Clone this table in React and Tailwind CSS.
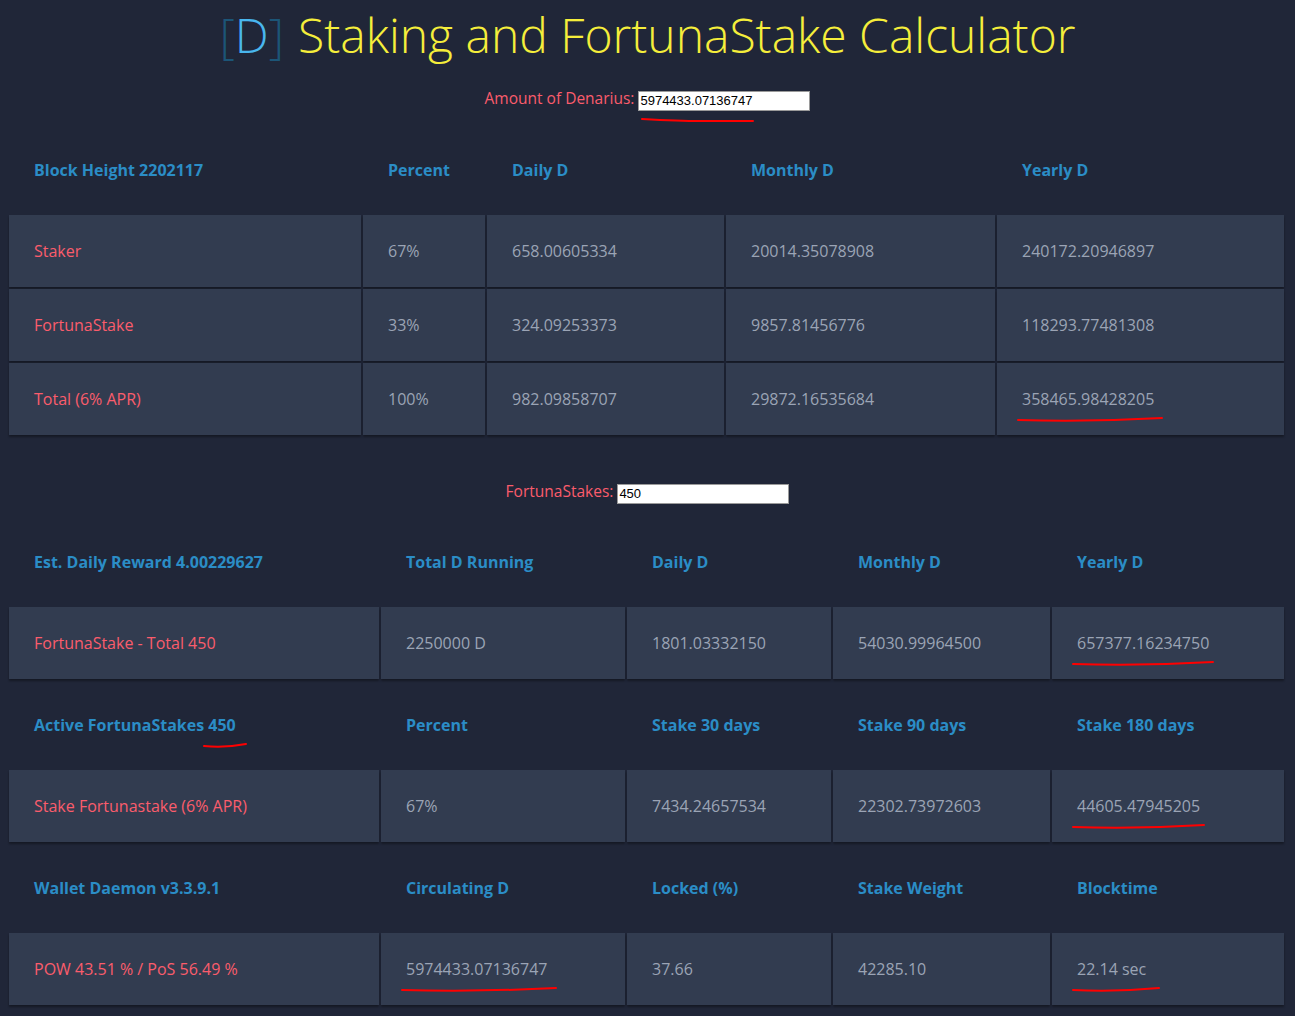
const Mark = ({ w, children }) => (
  <span className="relative inline-block">
    {children}
    <svg className="absolute left-[-6px] top-[29px] pointer-events-none" width={w + 12} height="8" viewBox={`0 0 ${w + 12} 8`}>
      <path d={`M2 4 Q ${(w + 12) / 2} 6 ${w + 10} 2`} stroke="#ff0000" strokeWidth="2" fill="none" strokeLinecap="round" />
    </svg>
  </span>
)

const Head = ({ children }) => (
  <div className="h-[87px] flex items-center pl-[25px] font-bold text-[#2b8dc6]">{children}</div>
)

const Cell = ({ red, children }) => (
  <div className={'h-[72px] flex items-center pl-[25px] bg-[#323c50] shadow-[0_2px_2px_rgba(0,0,0,0.35)] ' + (red ? 'text-[#fb5c6c]' : 'text-[#9ba4b5]')}>
    {children}
  </div>
)

const Input = ({ value, mark }) => (
  <span className="relative inline-block">
    <input
      readOnly
      value={value}
      className="w-[172px] h-[20px] bg-white border border-[#9a9a9a] px-[1px] text-[13px] text-black outline-none"
      style={{ fontFamily: '"Liberation Sans", Arial, sans-serif' }}
    />
    {mark && (
      <svg className="absolute left-[2px] top-[29px]" width="116" height="8" viewBox="0 0 116 8">
        <path d="M2 3 Q 40 5 60 5 T 113 5" stroke="#ff0000" strokeWidth="2" fill="none" strokeLinecap="round" />
      </svg>
    )}
  </span>
)

const App = () => {
  return (
    <div className="min-h-[1016px] bg-[#202638] pb-[20px] text-[16px]" style={{ fontFamily: '"Open Sans", "Noto Sans", sans-serif' }}>
      <h1 className="h-[70px] flex items-center justify-center text-[48px] font-light leading-none">
        <span className="text-[#1c5577]">[</span>
        <span className="text-[#49b6ee]">D</span>
        <span className="text-[#1c5577]">]</span>
        <span className="ml-[14px] text-[#f5ee3b]">Staking and FortunaStake Calculator</span>
      </h1>

      <div className="pt-[17px] pb-[15px] h-[56px] flex items-center justify-center gap-[4px]">
        <span className="text-[15.5px] text-[#fb5c6c]">Amount of Denarius:</span>
        <Input value="5974433.07136747" mark />
      </div>

      <div className="ml-[9px] w-[1275px] grid grid-cols-[352px_122px_237px_269px_287px] gap-[2px]">
        <Head>Block Height 2202117</Head>
        <Head>Percent</Head>
        <Head>Daily D</Head>
        <Head>Monthly D</Head>
        <Head>Yearly D</Head>

        <Cell red>Staker</Cell>
        <Cell>67%</Cell>
        <Cell>658.00605334</Cell>
        <Cell>20014.35078908</Cell>
        <Cell>240172.20946897</Cell>

        <Cell red>FortunaStake</Cell>
        <Cell>33%</Cell>
        <Cell>324.09253373</Cell>
        <Cell>9857.81456776</Cell>
        <Cell>118293.77481308</Cell>

        <Cell red>Total (6% APR)</Cell>
        <Cell>100%</Cell>
        <Cell>982.09858707</Cell>
        <Cell>29872.16535684</Cell>
        <Cell><Mark w={136}>358465.98428205</Mark></Cell>
      </div>

      <div className="mt-[45px] mb-[14px] h-[24px] flex items-center justify-center gap-[4px]">
        <span className="text-[15.5px] text-[#fb5c6c]">FortunaStakes:</span>
        <Input value="450" />
      </div>

      <div className="ml-[9px] w-[1275px] grid grid-cols-[370px_244px_204px_217px_232px] gap-[2px]">
        <Head>Est. Daily Reward 4.00229627</Head>
        <Head>Total D Running</Head>
        <Head>Daily D</Head>
        <Head>Monthly D</Head>
        <Head>Yearly D</Head>

        <Cell red>FortunaStake - Total 450</Cell>
        <Cell>2250000 D</Cell>
        <Cell>1801.03332150</Cell>
        <Cell>54030.99964500</Cell>
        <Cell><Mark w={132}>657377.16234750</Mark></Cell>

        <Head>
          <span>Active FortunaStakes <Mark w={34}>450</Mark></span>
        </Head>
        <Head>Percent</Head>
        <Head>Stake 30 days</Head>
        <Head>Stake 90 days</Head>
        <Head>Stake 180 days</Head>

        <Cell red>Stake Fortunastake (6% APR)</Cell>
        <Cell>67%</Cell>
        <Cell>7434.24657534</Cell>
        <Cell>22302.73972603</Cell>
        <Cell><Mark w={123}>44605.47945205</Mark></Cell>

        <Head>Wallet Daemon v3.3.9.1</Head>
        <Head>Circulating D</Head>
        <Head>Locked (%)</Head>
        <Head>Stake Weight</Head>
        <Head>Blocktime</Head>

        <Cell red>POW 43.51 % / PoS 56.49 %</Cell>
        <Cell><Mark w={146}>5974433.07136747</Mark></Cell>
        <Cell>37.66</Cell>
        <Cell>42285.10</Cell>
        <Cell><Mark w={78}>22.14 sec</Mark></Cell>
      </div>
    </div>
  )
}

export default App
